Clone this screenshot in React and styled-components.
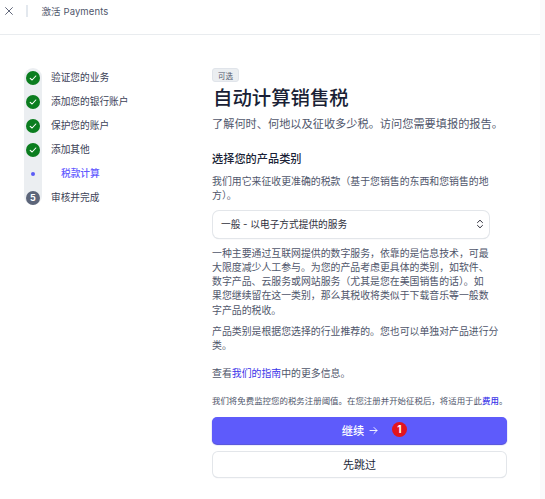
import React from "react";
import styled, { createGlobalStyle } from "styled-components";

const Global = createGlobalStyle`
  html, body { margin: 0; padding: 0; background: #fff; }
  body { font-family: "Inter", "Noto Sans CJK SC", sans-serif; color: #3c4257; }
  * { box-sizing: border-box; }
`;
const Page = styled.div`
  width: 545px; height: 499px; overflow: hidden; display: flex; flex-direction: column;
  border-right: 5px solid #fafafb;
`;
const Header = styled.header`
  height: 35px; flex: none; display: flex; align-items: center; padding: 0 0 12px 5px;
  border-bottom: 1px solid #e9ecef; margin-right: -5px;
`;
const Close = styled.svg`width: 8px; height: 8px; flex: none; margin-right: 13px;`;
const Divider = styled.span`width: 1.5px; height: 12px; background: #e3e8ee; margin-right: 14px;`;
const HeaderTitle = styled.span`font-size: 9.5px; color: #4f566b; letter-spacing: .1px;`;
const Body = styled.div`flex: 1; display: flex; padding: 33px 0 0 24px;`;
const Steps = styled.ol`
  width: 188px; flex: none; margin: 0; padding: 0; list-style: none; align-self: flex-start; position: relative;
`;
const Track = styled.span`
  position: absolute; left: 0; top: 0; width: 18px; height: 137px; background: #ebeef1; border-radius: 9px;
`;
const Step = styled.li`
  height: 24px; display: flex; align-items: center; position: relative; top: -3px;
  font-size: 9.7px; color: #3c4257; line-height: 1;
  padding-top: 1px;
`;
const Marker = styled.span`
  width: 18px; height: 18px; flex: none; display: flex; align-items: center; justify-content: center; margin-right: 9px;
`;
const Check = styled.span`
  width: 14px; height: 14px; border-radius: 50%; background: #0b7d1f; display: flex; align-items: center; justify-content: center;
`;
const Num = styled(Check)`
  background: #5c6579; color: #fff; font-size: 9px; font-weight: 700;
`;
const Dot = styled.span`width: 4px; height: 4px; border-radius: 50%; background: #5b5bf6;`;
const SubLabel = styled.span`color: #635bff; font-weight: 500; margin-left: 10px;`;
const Main = styled.main`width: 295px; flex: none; display: flex; flex-direction: column; align-items: flex-start;`;
const Badge = styled.span`
  height: 14px; width: 27px; background: #ebeef1; border: 1px solid #e0e4ea; border-radius: 3px; font-size: 7.5px;
  display: flex; align-items: center; justify-content: center; color: #4f566b; margin-bottom: 3px;
`;
const Title = styled.h1`margin: 0 0 0 1px; font-size: 19.4px; line-height: 26px; font-weight: 500; color: #1a1f36;`;
const Subtitle = styled.p`margin: 5px 0 0 0; font-size: 11.2px; line-height: 16px; color: #4f566b; white-space: nowrap;`;
const SectionTitle = styled.h2`margin: 19px 0 0; font-size: 11.2px; line-height: 16px; font-weight: 500; color: #1a1f36;`;
const Text = styled.p`
  margin: ${p => p.$top || 0}px 0 0; width: ${p => p.$width || 281}px; font-size: 9.9px; line-height: 14.3px; color: #4f566b;
`;
const Select = styled.div`
  width: 276px; height: 27px; margin: 8px 0 0 1px; border-radius: 6px; background: #fff;
  box-shadow: 0 0 0 1px #e3e6ea, 0 1px 1px 0 #c9ced6;
  display: flex; align-items: center; justify-content: space-between; padding: 0 5px 0 8px;
  font-size: 9.7px; color: #30313d;
`;
const Chevrons = styled.svg`width: 8px; height: 10px; flex: none;`;
const Fine = styled.p`margin: 15px 0 0; font-size: 8.45px; line-height: 12px; color: #4f566b; white-space: nowrap;`;
const Link = styled.a`color: #3b35e8; font-weight: 500;`;
const InlineLink = styled.a`color: #3b35e8;`;
const Primary = styled.button`
  width: 295px; height: 27px; margin-top: 10px; border: 0; border-radius: 5px; background: #5e5bfb; color: #fff;
  font: 500 11.2px "Inter", "Noto Sans CJK SC", sans-serif; display: flex; align-items: center; justify-content: center; gap: 5px;
  padding: 0 0 0 1px; position: relative; box-shadow: 0 1px 1px #4a47d8;
`;
const Arrow = styled.svg`width: 9px; height: 9px;`;
const Pin = styled.span`
  position: absolute; left: 180px; top: 5px; width: 15px; height: 15px; border-radius: 50%; background: #e3141c; color: #fff;
  font-size: 10px; font-weight: 700; display: flex; align-items: center; justify-content: center;
`;
const Secondary = styled.button`
  width: 293px; height: 25px; margin: 8px 0 0 1px; border: 0; border-radius: 5px; background: #fff; color: #1a1f36;
  font: 400 11px "Inter", "Noto Sans CJK SC", sans-serif; box-shadow: 0 0 0 1px #e3e6ea, 0 1px 1px 0 #c9ced6;
`;

const Tick = () => (
  <svg width="8" height="8" viewBox="0 0 8 8" fill="none" stroke="#fff" strokeWidth="1.1" strokeLinecap="round" strokeLinejoin="round">
    <path d="M1.2 4.3 3.1 6 6.8 2" />
  </svg>
);

const done = ["验证您的业务", "添加您的银行账户", "保护您的账户", "添加其他"];

export default function App() {
  return (
    <Page>
      <Global />
      <Header>
        <Close viewBox="0 0 8 8" fill="none" stroke="#4f566b" strokeWidth="0.9" strokeLinecap="round">
          <path d="M.6.6 7.4 7.4M7.4.6.6 7.4" />
        </Close>
        <Divider />
        <HeaderTitle>激活 Payments</HeaderTitle>
      </Header>
      <Body>
        <Steps>
          <Track />
          {done.map((label) => (
            <Step key={label}>
              <Marker><Check><Tick /></Check></Marker>
              {label}
            </Step>
          ))}
          <Step>
            <Marker><Dot /></Marker>
            <SubLabel>税款计算</SubLabel>
          </Step>
          <Step>
            <Marker><Num>5</Num></Marker>
            审核并完成
          </Step>
        </Steps>
        <Main>
          <Badge>可选</Badge>
          <Title>自动计算销售税</Title>
          <Subtitle>了解何时、何地以及征收多少税。访问您需要填报的报告。</Subtitle>
          <SectionTitle>选择您的产品类别</SectionTitle>
          <Text $top={7} $width={280}>我们用它来征收更准确的税款（基于您销售的东西和您销售的地方）。</Text>
          <Select>
            一般 - 以电子方式提供的服务
            <Chevrons viewBox="0 0 8 10" fill="none" stroke="#30313d" strokeWidth="1" strokeLinecap="round" strokeLinejoin="round">
              <path d="M1.5 3.6 4 1.2l2.5 2.4M1.5 6.4 4 8.8l2.5-2.4" />
            </Chevrons>
          </Select>
          <Text $top={8}>一种主要通过互联网提供的数字服务，依靠的是信息技术，可最大限度减少人工参与。为您的产品考虑更具体的类别，如软件、数字产品、云服务或网站服务（尤其是您在美国销售的话）。如果您继续留在这一类别，那么其税收将类似于下载音乐等一般数字产品的税收。</Text>
          <Text $top={7} $width={292}>产品类别是根据您选择的行业推荐的。您也可以单独对产品进行分类。</Text>
          <Text $top={13}>查看<InlineLink>我们的指南</InlineLink>中的更多信息。</Text>
          <Fine>我们将免费监控您的税务注册阈值。在您注册并开始征税后，将适用于此<Link>费用</Link>。</Fine>
          <Primary>
            继续
            <Arrow viewBox="0 0 9 9" fill="none" stroke="#fff" strokeWidth="0.9" strokeLinecap="round" strokeLinejoin="round">
              <path d="M1 4.5h7M5 1.5l3 3-3 3" />
            </Arrow>
            <Pin>1</Pin>
          </Primary>
          <Secondary>先跳过</Secondary>
        </Main>
      </Body>
    </Page>
  );
}
